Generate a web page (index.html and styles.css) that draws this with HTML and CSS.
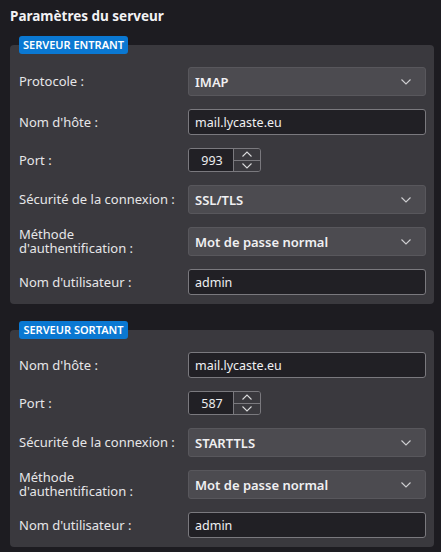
FILE: index.html
```html
<!DOCTYPE html>
<html lang="fr">
<head>
<meta charset="utf-8">
<link rel="stylesheet" href="styles.css">
</head>
<body>
<div class="page">
  <h1 class="title">Paramètres du serveur</h1>

  <section class="group">
    <span class="badge">SERVEUR ENTRANT</span>
    <div class="grid">
      <label class="lbl">Protocole :</label>
      <div class="select"><span>IMAP</span><svg class="chev" viewBox="0 0 10 6"><path d="M0.5 0.5 L5 5 L9.5 0.5"/></svg></div>

      <label class="lbl">Nom d'hôte :</label>
      <div class="input">mail.lycaste.eu</div>

      <label class="lbl">Port :</label>
      <div class="spin"><span class="num">993</span><span class="btns"><span class="btn"><svg viewBox="0 0 10 6"><path d="M0.5 5.5 L5 1 L9.5 5.5"/></svg></span><span class="btn"><svg viewBox="0 0 10 6"><path d="M0.5 0.5 L5 5 L9.5 0.5"/></svg></span></span></div>

      <label class="lbl">Sécurité de la connexion :</label>
      <div class="select"><span>SSL/TLS</span><svg class="chev" viewBox="0 0 10 6"><path d="M0.5 0.5 L5 5 L9.5 0.5"/></svg></div>

      <label class="lbl two"><span class="ln">Méthode</span><span class="ln">d'authentification :</span></label>
      <div class="select"><span>Mot de passe normal</span><svg class="chev" viewBox="0 0 10 6"><path d="M0.5 0.5 L5 5 L9.5 0.5"/></svg></div>

      <label class="lbl">Nom d'utilisateur :</label>
      <div class="input">admin</div>
    </div>
  </section>

  <section class="group second">
    <span class="badge">SERVEUR SORTANT</span>
    <div class="grid">
      <label class="lbl">Nom d'hôte :</label>
      <div class="input">mail.lycaste.eu</div>

      <label class="lbl">Port :</label>
      <div class="spin"><span class="num">587</span><span class="btns"><span class="btn"><svg viewBox="0 0 10 6"><path d="M0.5 5.5 L5 1 L9.5 5.5"/></svg></span><span class="btn"><svg viewBox="0 0 10 6"><path d="M0.5 0.5 L5 5 L9.5 0.5"/></svg></span></span></div>

      <label class="lbl">Sécurité de la connexion :</label>
      <div class="select"><span>STARTTLS</span><svg class="chev" viewBox="0 0 10 6"><path d="M0.5 0.5 L5 5 L9.5 0.5"/></svg></div>

      <label class="lbl two"><span class="ln">Méthode</span><span class="ln">d'authentification :</span></label>
      <div class="select"><span>Mot de passe normal</span><svg class="chev" viewBox="0 0 10 6"><path d="M0.5 0.5 L5 5 L9.5 0.5"/></svg></div>

      <label class="lbl">Nom d'utilisateur :</label>
      <div class="input">admin</div>
    </div>
  </section>
</div>
</body>
</html>
```

FILE: styles.css
```css
html, body {
  margin: 0;
  background: #1d1c21;
}
body {
  font-family: "Noto Sans", "Open Sans", sans-serif;
  color: #ececee;
  font-size: 13px;
}
.page {
  padding: 7px 7px 9px 10px;
}
.title {
  margin: 0;
  font-size: 13.5px;
  font-weight: 700;
  line-height: 18px;
  color: #f2f2f4;
}
.group {
  position: relative;
  margin-top: 20px;
  background: #3a393e;
  border-radius: 4px;
  padding: 22px 8px 9px 9px;
}
.group.second {
  margin-top: 26px;
}
.badge {
  position: absolute;
  left: 9px;
  top: -9px;
  height: 18px;
  width: 109px;
  box-sizing: border-box;
  background: #0a78d2;
  color: #ffffff;
  border-radius: 3px;
  font-size: 11px;
  font-weight: 600;
  line-height: 18px;
  text-align: center;
  white-space: nowrap;
}
.grid {
  display: grid;
  grid-template-columns: 169px 1fr;
  row-gap: 13px;
  align-items: center;
}
.lbl {
  line-height: 17px;
  color: #e6e6e8;
  white-space: nowrap;
}
.lbl.two {
  display: flex;
  flex-direction: column;
}
.ln {
  display: block;
  line-height: 13.5px;
}
.select {
  height: 29px;
  box-sizing: border-box;
  background: #4c4b50;
  border: 1px solid #58575c;
  border-radius: 3px;
  display: flex;
  align-items: center;
  justify-content: space-between;
  padding: 0 14px 0 6px;
  font-weight: 600;
  color: #f0f0f2;
}
.chev {
  width: 10px;
  height: 6px;
  fill: none;
  stroke: #cfcfd2;
  stroke-width: 1.1;
}
.input {
  height: 26px;
  box-sizing: border-box;
  background: #212025;
  border: 1px solid #7a797e;
  border-radius: 3px;
  display: flex;
  align-items: center;
  padding: 0 6px;
  color: #f0f0f2;
  font-size: 12.5px;
}
.spin {
  width: 73px;
  height: 24px;
  box-sizing: border-box;
  border: 1px solid #7a797e;
  border-radius: 3px;
  display: flex;
  overflow: hidden;
}
.num {
  width: 44px;
  background: #212025;
  display: flex;
  align-items: center;
  justify-content: center;
  padding-left: 2px;
  box-sizing: border-box;
  font-size: 12.5px;
}
.btns {
  flex: 1;
  display: flex;
  flex-direction: column;
  border-left: 1px solid #7a797e;
  background: #3a393e;
}
.btn {
  flex: 1;
  display: flex;
  align-items: center;
  justify-content: center;
}
.btn + .btn {
  border-top: 1px solid #7a797e;
}
.btn svg {
  width: 10px;
  height: 6px;
  fill: none;
  stroke: #d8d8da;
  stroke-width: 1.1;
}
```
